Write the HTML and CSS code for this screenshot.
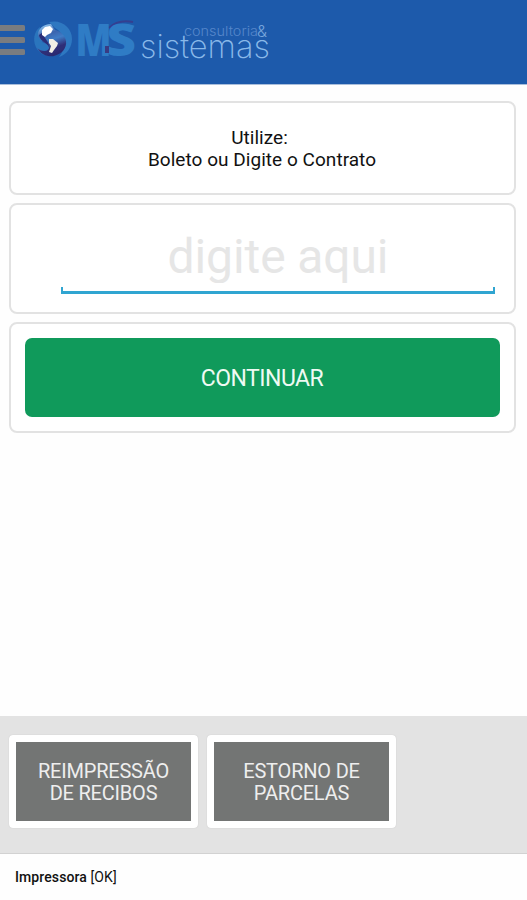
FILE: index.html
```html
<!DOCTYPE html>
<html lang="pt-BR">
<head>
<meta charset="utf-8">
<title>MS Sistemas</title>
<link rel="stylesheet" href="styles.css">
</head>
<body>
<header class="topbar">
  <svg class="brand" width="280" height="84" viewBox="0 0 280 84" role="img" aria-label="MS consultoria &amp; sistemas">
    <defs>
      <linearGradient id="sheen" x1=".3" y1="0" x2=".6" y2="1">
        <stop offset="0" stop-color="#8fc4ee"/>
        <stop offset=".3" stop-color="#3a64ae"/>
        <stop offset=".5" stop-color="#3f7cc6"/>
        <stop offset=".75" stop-color="#2f2f78"/>
        <stop offset="1" stop-color="#2b2a70"/>
      </linearGradient>
      <filter id="soft" x="-10%" y="-10%" width="120%" height="120%"><feGaussianBlur stdDeviation=".6"/></filter>
    </defs>
    <g fill="#797c80">
      <rect x="-2" y="25" width="27" height="6" rx="1.5"/>
      <rect x="-2" y="37" width="27" height="6" rx="1.5"/>
      <rect x="-2" y="49" width="27" height="6" rx="1.5"/>
    </g>
    <g filter="url(#soft)">
      <path d="M40 27C32 33 32 47 42 54C50 57 55 54 56 48L42 42Z" fill="#2c74bd"/>
      <path d="M49 22C62 19 72 28 72 39C72 48 66 55 59 57C67 48 66 34 55 28Z" fill="#2e78c1"/>
      <path d="M51 24C43 24 38 29 38 35C39 42 49 43 49 48C48 52 42 52 37 48C41 55 48 57 54 56C62 54 67 48 66 41C65 35 60 31 55 30Z" fill="url(#sheen)"/>
      <path d="M39 35C40 42 48 43 49 47C49 41 44 38 42 33Z" fill="#2b2d78"/>
      <path d="M42 30L45 27L50 26L53 29L51 33L47 35L45 37L42 35Z" fill="#fff"/>
      <path d="M49 39L53 39L58 43L57 46L54 50L52 53L49 52L51 46L49 43Z" fill="#f1efe6"/>
    </g>
    <path d="M109 28Q118 19 133 22" fill="none" stroke="#343f90" stroke-width="2"/>
    <text class="brand-m" x="75.500" y="55.500" textLength="36" lengthAdjust="spacingAndGlyphs">M</text>
    <text class="brand-s" x="106.500" y="55.500" textLength="29.500" lengthAdjust="spacingAndGlyphs">S</text>
    <path d="M105 46h4v7h-4z" fill="#393b83"/>
    <text class="brand-top" x="184" y="36" textLength="74" lengthAdjust="spacingAndGlyphs">consultoria</text>
    <text class="brand-amp" x="257" y="37">&amp;</text>
    <text class="brand-main" x="140" y="57.500" textLength="130" lengthAdjust="spacingAndGlyphs">sistemas</text>
  </svg>
</header>
<main class="content">
  <section class="card card-help"><span class="lead">Utilize:</span><br>Boleto ou Digite o Contrato</section>
  <section class="card card-field">
    <input class="field" type="text" placeholder="digite aqui">
    <div class="field-line"></div>
  </section>
  <section class="card card-action"><button class="primary">CONTINUAR</button></section>
</main>
<nav class="tools">
  <button class="tool">REIMPRESSÃO<br>DE RECIBOS</button>
  <button class="tool">ESTORNO DE<br>PARCELAS</button>
</nav>
<footer class="status">Impressora <span class="state">[OK]</span></footer>
</body>
</html>
```
FILE: styles.css
```css
* { box-sizing: border-box; }
body {
  margin: 0;
  height: 900px;
  display: flex;
  flex-direction: column;
  overflow: hidden;
  background: #fefefe;
  color: #111;
  font-family: Roboto, "Liberation Sans", sans-serif;
}
button, input { font: inherit; border: 0; padding: 0; margin: 0; }
.topbar { flex: none; height: 85px; background: #1d5aab; border-bottom: 1px solid #a9bedb; }
.brand { display: block; }
.brand-m, .brand-s { font-family: "Open Sans", sans-serif; font-weight: 800; font-size: 45px; fill: #2f7cc5; }
.brand-top { font-family: Inter, sans-serif; font-weight: 300; font-size: 13px; fill: #5687ca; }
.brand-amp { font-family: Inter, sans-serif; font-weight: 300; font-size: 16px; fill: #76a5dc; }
.brand-main { font-family: Inter, sans-serif; font-weight: 200; font-size: 33px; fill: #8ab9e9; }
.content { flex: 1; display: flex; flex-direction: column; gap: 8px; padding: 16px 11.5px 0 8.5px; }
.card { border: 2px solid #e2e2e2; border-radius: 8px; background: #fff; }
.card-help {
  height: 94px;
  padding-top: 24px;
  text-align: center;
  font-size: 19px;
  line-height: 22px;
  letter-spacing: .04px;
}
.lead { margin-right: 5px; }
.card-field { height: 111px; padding: 24px 18.5px 0 50.5px; }
.field {
  display: block;
  width: 100%;
  height: 54px;
  background: none;
  text-align: center;
  font-size: 48px;
  letter-spacing: -.1px;
  outline: 0;
}
.field::placeholder { color: #e6e6e6; opacity: 1; }
.field-line { height: 7px; margin-top: 4px; border: 2px solid #30a5d1; border-top: 0; border-bottom-width: 3px; }
.card-action { height: 111px; padding: 14px; }
.primary {
  display: block;
  width: 100%;
  height: 79px;
  padding-top: 2px;
  border-radius: 7px;
  background: #109a5b;
  color: #effaf3;
  font-size: 23px;
  letter-spacing: -.5px;
}
.tools {
  flex: none;
  display: flex;
  gap: 9px;
  height: 138px;
  padding: 19px 9px;
  background: #e3e3e3;
  border-bottom: 1px solid #d2d2d2;
}
.tool {
  width: 189px;
  height: 93px;
  border: 7px solid #fff;
  border-radius: 4px;
  background: #737574;
  box-shadow: 0 0 1px #bbb;
  color: #eee;
  font-size: 20px;
  line-height: 22px;
  letter-spacing: -.2px;
}
.status { flex: none; height: 46px; padding: 14px 15px; font-size: 14px; line-height: 18px; font-weight: 500; letter-spacing: .1px; }
.state { font-weight: 400; }
```
